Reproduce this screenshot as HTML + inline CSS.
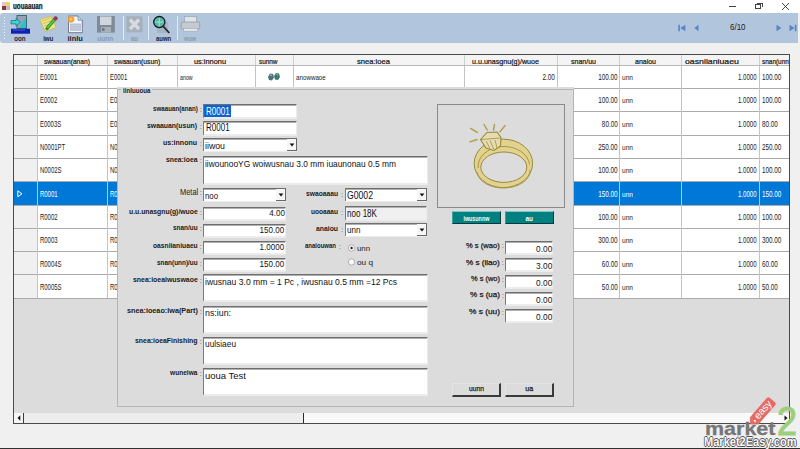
<!DOCTYPE html>
<html><head><meta charset="utf-8"><style>
html,body{margin:0;padding:0;width:800px;height:449px;overflow:hidden;background:#f0f0f0;}
body{position:relative;font-family:"Liberation Sans",sans-serif;}
.b{position:absolute;}
.t{position:absolute;white-space:nowrap;}
</style></head><body>
<div class="b" style="left:0px;top:0px;width:800px;height:449px;background:#f0f0f0;"></div>
<div class="b" style="left:0px;top:0px;width:800px;height:13px;background:#fff;"></div>
<div class="b" style="left:2px;top:2px;width:4px;height:4px;background:#f0c0d0;"></div>
<div class="b" style="left:6px;top:2px;width:4px;height:4px;background:#e8d860;"></div>
<div class="b" style="left:2px;top:6px;width:4px;height:4px;background:#8a3a30;"></div>
<div class="b" style="left:6px;top:6px;width:4px;height:4px;background:#c8b8c8;"></div>
<div class="t" style="left:13.40px;top:3.05px;font-size:8.20px;line-height:8.20px;color:#111;font-weight:bold;transform:scaleX(0.764);transform-origin:left;-webkit-text-stroke:0.25px #111;">uouaauan</div>
<div class="b" style="left:729px;top:6px;width:7px;height:1px;background:#444;"></div>
<div class="b" style="left:755px;top:4px;width:6px;height:5px;border:1px solid #444;box-sizing:border-box;"></div>
<div class="b" style="left:757px;top:3px;width:6px;height:1px;background:#444;"></div>
<div class="b" style="left:762px;top:3px;width:1px;height:4px;background:#444;"></div>
<svg class="b" style="left:781px;top:2px" width="9" height="9"><path d="M1 1L8 8M8 1L1 8" stroke="#444" stroke-width="1"/></svg>
<div class="b" style="left:0px;top:13px;width:798px;height:30px;background:#b1c5dd;border-radius:3px 0 0 3px;"></div>
<div class="b" style="left:4px;top:17px;width:1px;height:1px;background:#eef3f8;"></div>
<div class="b" style="left:4px;top:20px;width:1px;height:1px;background:#eef3f8;"></div>
<div class="b" style="left:4px;top:23px;width:1px;height:1px;background:#eef3f8;"></div>
<div class="b" style="left:4px;top:26px;width:1px;height:1px;background:#eef3f8;"></div>
<div class="b" style="left:4px;top:29px;width:1px;height:1px;background:#eef3f8;"></div>
<div class="b" style="left:4px;top:32px;width:1px;height:1px;background:#eef3f8;"></div>
<div class="b" style="left:4px;top:35px;width:1px;height:1px;background:#eef3f8;"></div>
<div class="b" style="left:4px;top:38px;width:1px;height:1px;background:#eef3f8;"></div>
<div class="b" style="left:123px;top:16px;width:1px;height:24px;background:#e4ecf4;"></div>
<div class="b" style="left:148px;top:16px;width:1px;height:24px;background:#e4ecf4;"></div>
<div class="b" style="left:177px;top:16px;width:1px;height:24px;background:#e4ecf4;"></div>
<div class="t" style="left:13.13px;top:34.75px;font-size:7.50px;line-height:7.50px;color:#223;font-weight:bold;transform:scaleX(0.822);transform-origin:center;">oon</div>
<div class="t" style="left:42.45px;top:34.75px;font-size:7.50px;line-height:7.50px;color:#223;font-weight:bold;transform:scaleX(0.816);transform-origin:center;">iwu</div>
<div class="t" style="left:67.49px;top:34.75px;font-size:7.50px;line-height:7.50px;color:#223;font-weight:bold;">iinlu</div>
<div class="t" style="left:96.14px;top:34.75px;font-size:7.50px;line-height:7.50px;color:#8a9ab0;font-weight:bold;transform:scaleX(0.873);transform-origin:center;">uunn</div>
<div class="t" style="left:130.12px;top:34.75px;font-size:7.50px;line-height:7.50px;color:#8a9ab0;font-weight:bold;transform:scaleX(0.800);transform-origin:center;">au</div>
<div class="t" style="left:153.72px;top:34.75px;font-size:7.50px;line-height:7.50px;color:#223;font-weight:bold;transform:scaleX(0.803);transform-origin:center;">auwn</div>
<div class="t" style="left:182.28px;top:34.75px;font-size:7.50px;line-height:7.50px;color:#8a9ab0;font-weight:bold;transform:scaleX(0.751);transform-origin:center;">wuw</div>

<svg class="b" style="left:0px;top:13px" width="210" height="24" viewBox="0 13 210 24">
 <!-- exit -->
 <rect x="16.5" y="15" width="10.5" height="14" fill="#3c6a70"/>
 <rect x="17.5" y="16" width="8.5" height="12" fill="#9aa0b8"/>
 <path d="M19 28 L26 17 L26 28 Z" fill="#22c8c8"/>
 <path d="M11 20.5 h5 v-2 l4.5 3.7 l-4.5 3.7 v-2 h-5 Z" fill="#30d8d8" stroke="#1a5a60" stroke-width="0.6"/>
 <rect x="11" y="28.7" width="19" height="5" fill="#1020b0"/>
 <rect x="13" y="29.5" width="12" height="1" fill="#4060e0"/>
 <!-- add notepad -->
 <path d="M39.8 19.5 L51 16.2 L56.2 27.5 L45 31.6 Z" fill="#f2e68c" stroke="#c8b458" stroke-width="0.8"/>
 <path d="M42 21 L50.5 18.3 M43 23.5 L52 20.6 M44.2 26 L53 23" stroke="#c0a848" stroke-width="0.7"/>
 <path d="M47 28.5 L54.8 19.2" stroke="#2c8a2a" stroke-width="3.4" stroke-linecap="round"/>
 <path d="M47.3 28 L54.5 19.5" stroke="#5ccc48" stroke-width="1.8"/>
 <circle cx="55.6" cy="18.4" r="2.1" fill="#9a3848"/>
 <!-- edit doc -->
 <path d="M68.5 16 h9.5 l4.3 4.3 v12.4 h-13.8 Z" fill="#f6f7fb" stroke="#646e80" stroke-width="0.9"/>
 <path d="M78 16 v4.3 h4.3" fill="#b8d8e0" stroke="#646e80" stroke-width="0.6"/>
 <rect x="70" y="23.5" width="11" height="7.5" fill="#b8c0d8"/>
 <path d="M70.5 25.5 h10 M70.5 27.7 h10 M70.5 29.9 h10" stroke="#d4daea" stroke-width="0.6"/>
 <circle cx="71" cy="19.3" r="3.8" fill="#f4b0a0" opacity="0.6"/>
 <circle cx="71" cy="19.3" r="3" fill="#f09a20"/>
 <circle cx="71" cy="19.3" r="1.5" fill="#ffd060"/>
 <!-- save (disabled) -->
 <rect x="97" y="16" width="17.8" height="16.6" fill="#7e8a96"/>
 <rect x="100" y="16.5" width="11.5" height="8.5" fill="#d0d6dc"/>
 <rect x="101" y="27" width="10" height="5.6" fill="#a8b0b8"/>
 <rect x="102" y="28" width="2.5" height="3" fill="#707a84"/>
 <!-- delete (disabled) -->
 <rect x="126.5" y="16.3" width="16" height="16" fill="#a6b0ba"/>
 <path d="M130 19.5 L139 29 M139 19.5 L130 29" stroke="#d6dbe0" stroke-width="3.4"/>
 <!-- search -->
 <rect x="157" y="22" width="11" height="11" fill="#a8b4c0"/>
 <circle cx="159.3" cy="22.1" r="5.6" fill="#58b8a8" stroke="#101820" stroke-width="1.3"/>
 <path d="M155 22 h8.6 M159.3 18 v8.5" stroke="#a0e0d0" stroke-width="1"/>
 <path d="M163.3 26.3 L169.3 33" stroke="#202830" stroke-width="1.8"/>
 <!-- print (disabled) -->
 <rect x="184.5" y="16.5" width="12" height="6" fill="#e0e4e8" stroke="#9aa4ae" stroke-width="0.7"/>
 <rect x="181.2" y="22" width="18.5" height="7" rx="1.5" fill="#c4cad0" stroke="#8a949e" stroke-width="0.7"/>
 <rect x="183.5" y="28.5" width="14" height="2.6" fill="#e8ecf0" stroke="#9aa4ae" stroke-width="0.5"/>
</svg>

<svg class="b" style="left:676px;top:22px" width="124" height="12" viewBox="676 22 124 12">
 <rect x="678.3" y="24.8" width="1.6" height="6.5" fill="#5b82cc"/>
 <path d="M685.4 24.8 L680.3 28 L685.4 31.3 Z" fill="#5b82cc"/>
 <path d="M698.5 24.8 L694.4 28 L698.5 31.3 Z" fill="#5b82cc"/>
 <path d="M776.5 24.8 L781.4 28 L776.5 31.3 Z" fill="#5b82cc"/>
 <path d="M789.5 24.8 L794.6 28 L789.5 31.3 Z" fill="#5b82cc"/>
 <rect x="794.8" y="24.8" width="1.6" height="6.5" fill="#5b82cc"/>
</svg>
<div class="t" style="left:730.00px;top:24.35px;font-size:8.20px;line-height:8.20px;color:#222;transform:scaleX(0.977);transform-origin:left;">6/10</div>
<div class="b" style="left:13px;top:54px;width:777px;height:370px;background:#dcdcdc;border:1px solid #4a4a4a;box-sizing:border-box;"></div>
<div class="b" style="left:14px;top:55px;width:775px;height:10px;background:#f4f4f4;"></div>
<div class="b" style="left:14px;top:65px;width:775px;height:1px;background:#b8b8b8;"></div>
<div class="b" style="left:37px;top:55px;width:1px;height:10px;background:#d0d0d0;"></div>
<div class="b" style="left:107px;top:55px;width:1px;height:10px;background:#d0d0d0;"></div>
<div class="b" style="left:177px;top:55px;width:1px;height:10px;background:#d0d0d0;"></div>
<div class="b" style="left:255px;top:55px;width:1px;height:10px;background:#d0d0d0;"></div>
<div class="b" style="left:293px;top:55px;width:1px;height:10px;background:#d0d0d0;"></div>
<div class="b" style="left:464px;top:55px;width:1px;height:10px;background:#d0d0d0;"></div>
<div class="b" style="left:557px;top:55px;width:1px;height:10px;background:#d0d0d0;"></div>
<div class="b" style="left:619px;top:55px;width:1px;height:10px;background:#d0d0d0;"></div>
<div class="b" style="left:681px;top:55px;width:1px;height:10px;background:#d0d0d0;"></div>
<div class="b" style="left:759px;top:55px;width:1px;height:10px;background:#d0d0d0;"></div>
<div class="b" style="left:14px;top:66px;width:23px;height:22px;background:#f0f0f0;"></div>
<div class="b" style="left:38px;top:66px;width:751px;height:22px;background:#ffffff;"></div>
<div class="b" style="left:14px;top:88px;width:775px;height:1px;background:#ababab;"></div>
<div class="b" style="left:14px;top:89px;width:23px;height:22px;background:#f0f0f0;"></div>
<div class="b" style="left:38px;top:89px;width:751px;height:22px;background:#ffffff;"></div>
<div class="b" style="left:14px;top:111px;width:775px;height:1px;background:#ababab;"></div>
<div class="b" style="left:14px;top:112px;width:23px;height:23px;background:#f0f0f0;"></div>
<div class="b" style="left:38px;top:112px;width:751px;height:23px;background:#ffffff;"></div>
<div class="b" style="left:14px;top:135px;width:775px;height:1px;background:#ababab;"></div>
<div class="b" style="left:14px;top:136px;width:23px;height:22px;background:#f0f0f0;"></div>
<div class="b" style="left:38px;top:136px;width:751px;height:22px;background:#ffffff;"></div>
<div class="b" style="left:14px;top:158px;width:775px;height:1px;background:#ababab;"></div>
<div class="b" style="left:14px;top:159px;width:23px;height:22px;background:#f0f0f0;"></div>
<div class="b" style="left:38px;top:159px;width:751px;height:22px;background:#ffffff;"></div>
<div class="b" style="left:14px;top:181px;width:775px;height:1px;background:#ababab;"></div>
<div class="b" style="left:14px;top:182px;width:23px;height:23px;background:#0078d7;"></div>
<div class="b" style="left:38px;top:182px;width:751px;height:23px;background:#0078d7;"></div>
<div class="b" style="left:14px;top:205px;width:775px;height:1px;background:#ababab;"></div>
<div class="b" style="left:14px;top:206px;width:23px;height:22px;background:#f0f0f0;"></div>
<div class="b" style="left:38px;top:206px;width:751px;height:22px;background:#ffffff;"></div>
<div class="b" style="left:14px;top:228px;width:775px;height:1px;background:#ababab;"></div>
<div class="b" style="left:14px;top:229px;width:23px;height:22px;background:#f0f0f0;"></div>
<div class="b" style="left:38px;top:229px;width:751px;height:22px;background:#ffffff;"></div>
<div class="b" style="left:14px;top:251px;width:775px;height:1px;background:#ababab;"></div>
<div class="b" style="left:14px;top:252px;width:23px;height:22px;background:#f0f0f0;"></div>
<div class="b" style="left:38px;top:252px;width:751px;height:22px;background:#ffffff;"></div>
<div class="b" style="left:14px;top:274px;width:775px;height:1px;background:#ababab;"></div>
<div class="b" style="left:14px;top:275px;width:23px;height:23px;background:#f0f0f0;"></div>
<div class="b" style="left:38px;top:275px;width:751px;height:23px;background:#ffffff;"></div>
<div class="b" style="left:14px;top:298px;width:775px;height:1px;background:#ababab;"></div>
<div class="b" style="left:37px;top:66px;width:1px;height:232px;background:#c4c4c4;"></div>
<div class="b" style="left:107px;top:66px;width:1px;height:232px;background:#c4c4c4;"></div>
<div class="b" style="left:177px;top:66px;width:1px;height:232px;background:#c4c4c4;"></div>
<div class="b" style="left:255px;top:66px;width:1px;height:232px;background:#c4c4c4;"></div>
<div class="b" style="left:293px;top:66px;width:1px;height:232px;background:#c4c4c4;"></div>
<div class="b" style="left:464px;top:66px;width:1px;height:232px;background:#c4c4c4;"></div>
<div class="b" style="left:557px;top:66px;width:1px;height:232px;background:#c4c4c4;"></div>
<div class="b" style="left:619px;top:66px;width:1px;height:232px;background:#c4c4c4;"></div>
<div class="b" style="left:681px;top:66px;width:1px;height:232px;background:#c4c4c4;"></div>
<div class="b" style="left:759px;top:66px;width:1px;height:232px;background:#c4c4c4;"></div>
<div class="t" style="left:44.00px;top:57.76px;font-size:7.60px;line-height:7.60px;color:#111;transform:scaleX(0.878);transform-origin:left;-webkit-text-stroke:0.2px #111;">swaauan(anan)</div>
<div class="t" style="left:113.70px;top:57.76px;font-size:7.60px;line-height:7.60px;color:#111;transform:scaleX(0.891);transform-origin:left;-webkit-text-stroke:0.2px #111;">swaauan(usun)</div>
<div class="t" style="left:194.00px;top:57.76px;font-size:7.60px;line-height:7.60px;color:#111;transform:scaleX(0.971);transform-origin:left;-webkit-text-stroke:0.2px #111;">us:innonu</div>
<div class="t" style="left:258.50px;top:57.76px;font-size:7.60px;line-height:7.60px;color:#111;transform:scaleX(0.842);transform-origin:left;-webkit-text-stroke:0.2px #111;">sunnw</div>
<div class="t" style="left:357.00px;top:57.76px;font-size:7.60px;line-height:7.60px;color:#111;-webkit-text-stroke:0.2px #111;">snea:ioea</div>
<div class="t" style="left:472.00px;top:57.76px;font-size:7.60px;line-height:7.60px;color:#111;transform:scaleX(0.938);transform-origin:left;-webkit-text-stroke:0.2px #111;">u.u.unasgnu(g)/wuoe</div>
<div class="t" style="left:571.00px;top:57.76px;font-size:7.60px;line-height:7.60px;color:#111;transform:scaleX(0.924);transform-origin:left;-webkit-text-stroke:0.2px #111;">snan/uu</div>
<div class="t" style="left:635.00px;top:57.76px;font-size:7.60px;line-height:7.60px;color:#111;transform:scaleX(0.920);transform-origin:left;-webkit-text-stroke:0.2px #111;">anaiou</div>
<div class="t" style="left:685.00px;top:57.76px;font-size:7.60px;line-height:7.60px;color:#111;transform:scaleX(1.151);transform-origin:left;-webkit-text-stroke:0.2px #111;">oasniianiuaeu</div>
<div class="t" style="left:762.00px;top:57.76px;font-size:7.60px;line-height:7.60px;color:#111;transform:scaleX(0.848);transform-origin:left;-webkit-text-stroke:0.2px #111;">snan(unn)/uu</div>
<div class="b" style="left:789px;top:55px;width:11px;height:10px;background:#f0f0f0;"></div>
<div class="t" style="left:40.00px;top:73.03px;font-size:8.70px;line-height:8.70px;color:#222;transform:scaleX(0.686);transform-origin:left;">E0001</div>
<div class="t" style="left:110.30px;top:73.03px;font-size:8.70px;line-height:8.70px;color:#222;transform:scaleX(0.686);transform-origin:left;">E0001</div>
<div class="t" style="left:590.69px;top:73.03px;font-size:8.70px;line-height:8.70px;color:#222;transform:scaleX(0.730);transform-origin:right;">100.00</div>
<div class="t" style="left:622.00px;top:74.00px;font-size:7.20px;line-height:7.20px;color:#222;transform:scaleX(0.916);transform-origin:left;">unn</div>
<div class="t" style="left:730.19px;top:73.03px;font-size:8.70px;line-height:8.70px;color:#222;transform:scaleX(0.700);transform-origin:right;">1.0000</div>
<div class="t" style="left:762.00px;top:73.03px;font-size:8.70px;line-height:8.70px;color:#222;transform:scaleX(0.730);transform-origin:left;">100.00</div>
<div class="t" style="left:40.00px;top:96.36px;font-size:8.70px;line-height:8.70px;color:#222;transform:scaleX(0.686);transform-origin:left;">E0002</div>
<div class="t" style="left:110.30px;top:96.36px;font-size:8.70px;line-height:8.70px;color:#222;transform:scaleX(0.686);transform-origin:left;">E0002</div>
<div class="t" style="left:590.69px;top:96.36px;font-size:8.70px;line-height:8.70px;color:#222;transform:scaleX(0.730);transform-origin:right;">100.00</div>
<div class="t" style="left:622.00px;top:97.33px;font-size:7.20px;line-height:7.20px;color:#222;transform:scaleX(0.916);transform-origin:left;">unn</div>
<div class="t" style="left:730.19px;top:96.36px;font-size:8.70px;line-height:8.70px;color:#222;transform:scaleX(0.700);transform-origin:right;">1.0000</div>
<div class="t" style="left:762.00px;top:96.36px;font-size:8.70px;line-height:8.70px;color:#222;transform:scaleX(0.730);transform-origin:left;">100.00</div>
<div class="t" style="left:40.00px;top:119.69px;font-size:8.70px;line-height:8.70px;color:#222;transform:scaleX(0.686);transform-origin:left;">E0003S</div>
<div class="t" style="left:110.30px;top:119.69px;font-size:8.70px;line-height:8.70px;color:#222;transform:scaleX(0.686);transform-origin:left;">E0003S</div>
<div class="t" style="left:595.53px;top:119.69px;font-size:8.70px;line-height:8.70px;color:#222;transform:scaleX(0.730);transform-origin:right;">80.00</div>
<div class="t" style="left:622.00px;top:120.66px;font-size:7.20px;line-height:7.20px;color:#222;transform:scaleX(0.916);transform-origin:left;">unn</div>
<div class="t" style="left:730.19px;top:119.69px;font-size:8.70px;line-height:8.70px;color:#222;transform:scaleX(0.700);transform-origin:right;">1.0000</div>
<div class="t" style="left:762.00px;top:119.69px;font-size:8.70px;line-height:8.70px;color:#222;transform:scaleX(0.730);transform-origin:left;">80.00</div>
<div class="t" style="left:40.00px;top:143.02px;font-size:8.70px;line-height:8.70px;color:#222;transform:scaleX(0.686);transform-origin:left;">N0001PT</div>
<div class="t" style="left:110.30px;top:143.02px;font-size:8.70px;line-height:8.70px;color:#222;transform:scaleX(0.686);transform-origin:left;">N0001PT</div>
<div class="t" style="left:590.69px;top:143.02px;font-size:8.70px;line-height:8.70px;color:#222;transform:scaleX(0.730);transform-origin:right;">250.00</div>
<div class="t" style="left:622.00px;top:143.99px;font-size:7.20px;line-height:7.20px;color:#222;transform:scaleX(0.916);transform-origin:left;">unn</div>
<div class="t" style="left:730.19px;top:143.02px;font-size:8.70px;line-height:8.70px;color:#222;transform:scaleX(0.700);transform-origin:right;">1.0000</div>
<div class="t" style="left:762.00px;top:143.02px;font-size:8.70px;line-height:8.70px;color:#222;transform:scaleX(0.730);transform-origin:left;">250.00</div>
<div class="t" style="left:40.00px;top:166.35px;font-size:8.70px;line-height:8.70px;color:#222;transform:scaleX(0.686);transform-origin:left;">N0002S</div>
<div class="t" style="left:110.30px;top:166.35px;font-size:8.70px;line-height:8.70px;color:#222;transform:scaleX(0.686);transform-origin:left;">N0002S</div>
<div class="t" style="left:590.69px;top:166.35px;font-size:8.70px;line-height:8.70px;color:#222;transform:scaleX(0.730);transform-origin:right;">100.00</div>
<div class="t" style="left:622.00px;top:167.32px;font-size:7.20px;line-height:7.20px;color:#222;transform:scaleX(0.916);transform-origin:left;">unn</div>
<div class="t" style="left:730.19px;top:166.35px;font-size:8.70px;line-height:8.70px;color:#222;transform:scaleX(0.700);transform-origin:right;">1.0000</div>
<div class="t" style="left:762.00px;top:166.35px;font-size:8.70px;line-height:8.70px;color:#222;transform:scaleX(0.730);transform-origin:left;">100.00</div>
<div class="t" style="left:40.00px;top:189.68px;font-size:8.70px;line-height:8.70px;color:#ffffff;transform:scaleX(0.686);transform-origin:left;">R0001</div>
<div class="t" style="left:110.30px;top:189.68px;font-size:8.70px;line-height:8.70px;color:#ffffff;transform:scaleX(0.686);transform-origin:left;">R0001</div>
<div class="t" style="left:590.69px;top:189.68px;font-size:8.70px;line-height:8.70px;color:#ffffff;transform:scaleX(0.730);transform-origin:right;">150.00</div>
<div class="t" style="left:622.00px;top:190.65px;font-size:7.20px;line-height:7.20px;color:#ffffff;transform:scaleX(0.916);transform-origin:left;">unn</div>
<div class="t" style="left:730.19px;top:189.68px;font-size:8.70px;line-height:8.70px;color:#ffffff;transform:scaleX(0.700);transform-origin:right;">1.0000</div>
<div class="t" style="left:762.00px;top:189.68px;font-size:8.70px;line-height:8.70px;color:#ffffff;transform:scaleX(0.730);transform-origin:left;">150.00</div>
<svg class="b" style="left:17px;top:190px" width="6" height="8"><path d="M0.8 0.8 L5 3.8 L0.8 6.8 Z" fill="none" stroke="#fff" stroke-width="1"/></svg>
<div class="t" style="left:40.00px;top:213.01px;font-size:8.70px;line-height:8.70px;color:#222;transform:scaleX(0.686);transform-origin:left;">R0002</div>
<div class="t" style="left:110.30px;top:213.01px;font-size:8.70px;line-height:8.70px;color:#222;transform:scaleX(0.686);transform-origin:left;">R0002</div>
<div class="t" style="left:590.69px;top:213.01px;font-size:8.70px;line-height:8.70px;color:#222;transform:scaleX(0.730);transform-origin:right;">100.00</div>
<div class="t" style="left:622.00px;top:213.98px;font-size:7.20px;line-height:7.20px;color:#222;transform:scaleX(0.916);transform-origin:left;">unn</div>
<div class="t" style="left:730.19px;top:213.01px;font-size:8.70px;line-height:8.70px;color:#222;transform:scaleX(0.700);transform-origin:right;">1.0000</div>
<div class="t" style="left:762.00px;top:213.01px;font-size:8.70px;line-height:8.70px;color:#222;transform:scaleX(0.730);transform-origin:left;">100.00</div>
<div class="t" style="left:40.00px;top:236.34px;font-size:8.70px;line-height:8.70px;color:#222;transform:scaleX(0.686);transform-origin:left;">R0003</div>
<div class="t" style="left:110.30px;top:236.34px;font-size:8.70px;line-height:8.70px;color:#222;transform:scaleX(0.686);transform-origin:left;">R0003</div>
<div class="t" style="left:590.69px;top:236.34px;font-size:8.70px;line-height:8.70px;color:#222;transform:scaleX(0.730);transform-origin:right;">300.00</div>
<div class="t" style="left:622.00px;top:237.31px;font-size:7.20px;line-height:7.20px;color:#222;transform:scaleX(0.916);transform-origin:left;">unn</div>
<div class="t" style="left:730.19px;top:236.34px;font-size:8.70px;line-height:8.70px;color:#222;transform:scaleX(0.700);transform-origin:right;">1.0000</div>
<div class="t" style="left:762.00px;top:236.34px;font-size:8.70px;line-height:8.70px;color:#222;transform:scaleX(0.730);transform-origin:left;">300.00</div>
<div class="t" style="left:40.00px;top:259.67px;font-size:8.70px;line-height:8.70px;color:#222;transform:scaleX(0.686);transform-origin:left;">R0004S</div>
<div class="t" style="left:110.30px;top:259.67px;font-size:8.70px;line-height:8.70px;color:#222;transform:scaleX(0.686);transform-origin:left;">R0004S</div>
<div class="t" style="left:595.53px;top:259.67px;font-size:8.70px;line-height:8.70px;color:#222;transform:scaleX(0.730);transform-origin:right;">60.00</div>
<div class="t" style="left:622.00px;top:260.64px;font-size:7.20px;line-height:7.20px;color:#222;transform:scaleX(0.916);transform-origin:left;">unn</div>
<div class="t" style="left:730.19px;top:259.67px;font-size:8.70px;line-height:8.70px;color:#222;transform:scaleX(0.700);transform-origin:right;">1.0000</div>
<div class="t" style="left:762.00px;top:259.67px;font-size:8.70px;line-height:8.70px;color:#222;transform:scaleX(0.730);transform-origin:left;">60.00</div>
<div class="t" style="left:40.00px;top:283.00px;font-size:8.70px;line-height:8.70px;color:#222;transform:scaleX(0.686);transform-origin:left;">R0005S</div>
<div class="t" style="left:110.30px;top:283.00px;font-size:8.70px;line-height:8.70px;color:#222;transform:scaleX(0.686);transform-origin:left;">R0005S</div>
<div class="t" style="left:595.53px;top:283.00px;font-size:8.70px;line-height:8.70px;color:#222;transform:scaleX(0.730);transform-origin:right;">50.00</div>
<div class="t" style="left:622.00px;top:283.97px;font-size:7.20px;line-height:7.20px;color:#222;transform:scaleX(0.916);transform-origin:left;">unn</div>
<div class="t" style="left:730.19px;top:283.00px;font-size:8.70px;line-height:8.70px;color:#222;transform:scaleX(0.700);transform-origin:right;">1.0000</div>
<div class="t" style="left:762.00px;top:283.00px;font-size:8.70px;line-height:8.70px;color:#222;transform:scaleX(0.730);transform-origin:left;">50.00</div>
<div class="t" style="left:179.60px;top:73.50px;font-size:7.20px;line-height:7.20px;color:#222;transform:scaleX(0.738);transform-origin:left;">anow</div>
<div class="t" style="left:295.50px;top:73.50px;font-size:7.20px;line-height:7.20px;color:#222;transform:scaleX(0.866);transform-origin:left;">anowwaoe</div>
<div class="t" style="left:538.07px;top:73.03px;font-size:8.70px;line-height:8.70px;color:#222;transform:scaleX(0.738);transform-origin:right;">2.00</div>
<svg class="b" style="left:266px;top:71px" width="16" height="11"><path d="M2 6 L4 2.5 L7 3 L8 6.5 L6 9.5 L3 9 Z" fill="#50707e"/><path d="M8 5 L10 2 L13 2.5 L14 6 L12 9 L9 8.5 Z" fill="#3f7a6e"/><path d="M4 4 L6 4.5 M10.5 3.5 L12 4" stroke="#b8d8e0" stroke-width="0.8"/></svg>
<div class="b" style="left:790px;top:43px;width:10px;height:406px;background:#f0f0f0;"></div>
<div class="b" style="left:789px;top:54px;width:1px;height:370px;background:#4a4a4a;"></div>
<div class="b" style="left:14px;top:413px;width:775px;height:10px;background:#f9f9f9;"></div>
<div class="b" style="left:23px;top:413px;width:281px;height:10px;background:#ededed;border-right:1px solid #2a2a2a;box-sizing:border-box;"></div>
<div class="b" style="left:14px;top:413px;width:10px;height:10px;background:#f6f6f6;border-right:1px solid #3a3a3a;box-sizing:border-box;"></div>
<svg class="b" style="left:16px;top:414px" width="6" height="8"><path d="M4.3 1.3 L1.5 4 L4.3 6.7 Z" fill="#111"/></svg>
<div class="b" style="left:783px;top:413px;width:6px;height:10px;background:#f6f6f6;"></div>
<svg class="b" style="left:783px;top:414px" width="6" height="8"><path d="M1.5 1.5 L4.5 4 L1.5 6.5 Z" fill="#111"/></svg>
<div class="b" style="left:0px;top:448px;width:800px;height:1px;background:#303030;"></div>
<div class="b" style="left:117px;top:87px;width:457px;height:326px;background:#dcdcdc;"></div>
<div class="b" style="left:117px;top:89px;width:457px;height:318px;border:1px solid #b4b4b4;box-sizing:border-box;"></div>
<div class="b" style="left:121px;top:87px;width:31px;height:6px;background:#dcdcdc;"></div>
<div class="t" style="left:123.00px;top:86.73px;font-size:7.40px;line-height:7.40px;color:#1a1a1a;font-weight:bold;transform:scaleX(0.836);transform-origin:left;">iinluuoua</div>
<div class="b" style="left:203px;top:104px;width:94px;height:15px;background:#fff;border-top:1px solid #6e6e6e;border-left:1px solid #7a7a7a;border-bottom:2px solid #ececec;border-right:1px solid #ececec;box-sizing:border-box;box-shadow:inset 0 1px 0 #b0b0b0;"></div>
<div class="b" style="left:203px;top:121px;width:94px;height:15px;background:#fff;border-top:1px solid #6e6e6e;border-left:1px solid #7a7a7a;border-bottom:2px solid #ececec;border-right:1px solid #ececec;box-sizing:border-box;box-shadow:inset 0 1px 0 #b0b0b0;"></div>
<div class="b" style="left:203px;top:138px;width:94px;height:13px;background:#fff;border-top:1px solid #6e6e6e;border-left:1px solid #7a7a7a;box-sizing:border-box;box-shadow:inset 0 1px 0 #b0b0b0, 0 1px 0 #ececec;"></div>
<div class="b" style="left:287px;top:139px;width:10px;height:12px;background:#f6f6f6;border-right:1px solid #666;border-bottom:1px solid #666;box-sizing:border-box;"></div>
<svg class="b" style="left:289.0px;top:142.7px" width="6" height="4"><path d="M0.6 0.6 L5.4 0.6 L3 3.4 Z" fill="#111"/></svg>
<div class="b" style="left:203px;top:156px;width:225px;height:29px;background:#fff;border-top:1px solid #6e6e6e;border-left:1px solid #7a7a7a;border-bottom:2px solid #ececec;border-right:1px solid #ececec;box-sizing:border-box;box-shadow:inset 0 1px 0 #b0b0b0;"></div>
<div class="b" style="left:203px;top:188px;width:83px;height:13px;background:#fff;border-top:1px solid #6e6e6e;border-left:1px solid #7a7a7a;box-sizing:border-box;box-shadow:inset 0 1px 0 #b0b0b0, 0 1px 0 #ececec;"></div>
<div class="b" style="left:276px;top:189px;width:10px;height:12px;background:#f6f6f6;border-right:1px solid #666;border-bottom:1px solid #666;box-sizing:border-box;"></div>
<svg class="b" style="left:278.0px;top:192.7px" width="6" height="4"><path d="M0.6 0.6 L5.4 0.6 L3 3.4 Z" fill="#111"/></svg>
<div class="b" style="left:203px;top:207px;width:83px;height:14px;background:#fff;border-top:1px solid #6e6e6e;border-left:1px solid #7a7a7a;border-bottom:2px solid #ececec;border-right:1px solid #ececec;box-sizing:border-box;box-shadow:inset 0 1px 0 #b0b0b0;"></div>
<div class="b" style="left:203px;top:224px;width:83px;height:14px;background:#fff;border-top:1px solid #6e6e6e;border-left:1px solid #7a7a7a;border-bottom:2px solid #ececec;border-right:1px solid #ececec;box-sizing:border-box;box-shadow:inset 0 1px 0 #b0b0b0;"></div>
<div class="b" style="left:203px;top:241px;width:83px;height:14px;background:#fff;border-top:1px solid #6e6e6e;border-left:1px solid #7a7a7a;border-bottom:2px solid #ececec;border-right:1px solid #ececec;box-sizing:border-box;box-shadow:inset 0 1px 0 #b0b0b0;"></div>
<div class="b" style="left:203px;top:258px;width:83px;height:14px;background:#fff;border-top:1px solid #6e6e6e;border-left:1px solid #7a7a7a;border-bottom:2px solid #ececec;border-right:1px solid #ececec;box-sizing:border-box;box-shadow:inset 0 1px 0 #b0b0b0;"></div>
<div class="b" style="left:203px;top:274px;width:225px;height:28px;background:#fff;border-top:1px solid #6e6e6e;border-left:1px solid #7a7a7a;border-bottom:2px solid #ececec;border-right:1px solid #ececec;box-sizing:border-box;box-shadow:inset 0 1px 0 #b0b0b0;"></div>
<div class="b" style="left:203px;top:306px;width:225px;height:28px;background:#fff;border-top:1px solid #6e6e6e;border-left:1px solid #7a7a7a;border-bottom:2px solid #ececec;border-right:1px solid #ececec;box-sizing:border-box;box-shadow:inset 0 1px 0 #b0b0b0;"></div>
<div class="b" style="left:203px;top:337px;width:225px;height:28px;background:#fff;border-top:1px solid #6e6e6e;border-left:1px solid #7a7a7a;border-bottom:2px solid #ececec;border-right:1px solid #ececec;box-sizing:border-box;box-shadow:inset 0 1px 0 #b0b0b0;"></div>
<div class="b" style="left:203px;top:368px;width:225px;height:28px;background:#fff;border-top:1px solid #6e6e6e;border-left:1px solid #7a7a7a;border-bottom:2px solid #ececec;border-right:1px solid #ececec;box-sizing:border-box;box-shadow:inset 0 1px 0 #b0b0b0;"></div>
<div class="b" style="left:345px;top:188px;width:82px;height:13px;background:#fff;border-top:1px solid #6e6e6e;border-left:1px solid #7a7a7a;box-sizing:border-box;box-shadow:inset 0 1px 0 #b0b0b0, 0 1px 0 #ececec;"></div>
<div class="b" style="left:417px;top:189px;width:10px;height:12px;background:#f6f6f6;border-right:1px solid #666;border-bottom:1px solid #666;box-sizing:border-box;"></div>
<svg class="b" style="left:419.0px;top:192.7px" width="6" height="4"><path d="M0.6 0.6 L5.4 0.6 L3 3.4 Z" fill="#111"/></svg>
<div class="b" style="left:345px;top:206px;width:82px;height:15px;background:#f0f0f0;border-top:1px solid #6e6e6e;border-left:1px solid #7a7a7a;border-bottom:2px solid #ececec;border-right:1px solid #ececec;box-sizing:border-box;box-shadow:inset 0 1px 0 #b0b0b0;"></div>
<div class="b" style="left:345px;top:223px;width:82px;height:13px;background:#fff;border-top:1px solid #6e6e6e;border-left:1px solid #7a7a7a;box-sizing:border-box;box-shadow:inset 0 1px 0 #b0b0b0, 0 1px 0 #ececec;"></div>
<div class="b" style="left:417px;top:224px;width:10px;height:12px;background:#f6f6f6;border-right:1px solid #666;border-bottom:1px solid #666;box-sizing:border-box;"></div>
<svg class="b" style="left:419.0px;top:227.7px" width="6" height="4"><path d="M0.6 0.6 L5.4 0.6 L3 3.4 Z" fill="#111"/></svg>
<div class="b" style="left:437px;top:104px;width:128px;height:104px;border:1px solid #8a8a8a;box-sizing:border-box;background:#dcdcdc;"></div>
<div class="b" style="left:452px;top:211px;width:49px;height:13px;background:#008080;border-top:1px solid #7cc8c8;border-left:1px solid #40a0a0;border-bottom:1px solid #003c3c;border-right:1px solid #003c3c;box-sizing:border-box;"></div>
<div class="b" style="left:505px;top:211px;width:49px;height:13px;background:#008080;border-top:1px solid #7cc8c8;border-left:1px solid #40a0a0;border-bottom:1px solid #003c3c;border-right:1px solid #003c3c;box-sizing:border-box;"></div>
<div class="t" style="left:459.40px;top:214.90px;font-size:7.20px;line-height:7.20px;color:#f4ffff;font-weight:bold;transform:scaleX(0.747);transform-origin:center;">iwusunnw</div>
<div class="t" style="left:525.30px;top:214.90px;font-size:7.20px;line-height:7.20px;color:#f4ffff;font-weight:bold;transform:scaleX(0.893);transform-origin:center;">au</div>
<div class="b" style="left:505px;top:241px;width:48px;height:14px;background:#fff;border-top:1px solid #6e6e6e;border-left:1px solid #7a7a7a;border-bottom:2px solid #ececec;border-right:1px solid #ececec;box-sizing:border-box;box-shadow:inset 0 1px 0 #b0b0b0;"></div>
<div class="b" style="left:505px;top:258px;width:48px;height:14px;background:#fff;border-top:1px solid #6e6e6e;border-left:1px solid #7a7a7a;border-bottom:2px solid #ececec;border-right:1px solid #ececec;box-sizing:border-box;box-shadow:inset 0 1px 0 #b0b0b0;"></div>
<div class="b" style="left:505px;top:275px;width:48px;height:14px;background:#fff;border-top:1px solid #6e6e6e;border-left:1px solid #7a7a7a;border-bottom:2px solid #ececec;border-right:1px solid #ececec;box-sizing:border-box;box-shadow:inset 0 1px 0 #b0b0b0;"></div>
<div class="b" style="left:505px;top:292px;width:48px;height:14px;background:#fff;border-top:1px solid #6e6e6e;border-left:1px solid #7a7a7a;border-bottom:2px solid #ececec;border-right:1px solid #ececec;box-sizing:border-box;box-shadow:inset 0 1px 0 #b0b0b0;"></div>
<div class="b" style="left:505px;top:309px;width:48px;height:14px;background:#fff;border-top:1px solid #6e6e6e;border-left:1px solid #7a7a7a;border-bottom:2px solid #ececec;border-right:1px solid #ececec;box-sizing:border-box;box-shadow:inset 0 1px 0 #b0b0b0;"></div>
<div class="b" style="left:452px;top:383px;width:49px;height:14px;background:#dcdcdc;border-top:1px solid #f4f4f4;border-left:1px solid #f4f4f4;border-bottom:2px solid #3a3a3a;border-right:2px solid #3a3a3a;border-top-color:#e4e4e4;border-left-color:#e4e4e4;box-sizing:border-box;"></div>
<div class="b" style="left:505px;top:383px;width:49px;height:14px;background:#dcdcdc;border-top:1px solid #f4f4f4;border-left:1px solid #f4f4f4;border-bottom:2px solid #3a3a3a;border-right:2px solid #3a3a3a;border-top-color:#e4e4e4;border-left-color:#e4e4e4;box-sizing:border-box;"></div>
<div class="t" style="left:467.55px;top:385.36px;font-size:7.60px;line-height:7.60px;color:#1a1a1a;transform:scaleX(0.887);transform-origin:center;-webkit-text-stroke:0.25px #1a1a1a;">uunn</div>
<div class="t" style="left:524.77px;top:385.36px;font-size:7.60px;line-height:7.60px;color:#1a1a1a;transform:scaleX(0.946);transform-origin:center;-webkit-text-stroke:0.25px #1a1a1a;">ua</div>
<div class="t" style="left:152.70px;top:104.82px;font-size:8.00px;line-height:8.00px;color:#1a1a1a;font-weight:bold;transform:scaleX(0.775);transform-origin:left;">swaauan(anan)</div>
<div class="t" style="left:199.80px;top:105.85px;font-size:7.50px;line-height:7.50px;color:#555;">:</div>
<div class="t" style="left:147.40px;top:121.52px;font-size:8.00px;line-height:8.00px;color:#1a1a1a;font-weight:bold;transform:scaleX(0.860);transform-origin:left;">swaauan(usun)</div>
<div class="t" style="left:199.80px;top:122.55px;font-size:7.50px;line-height:7.50px;color:#555;">:</div>
<div class="t" style="left:163.40px;top:138.82px;font-size:8.00px;line-height:8.00px;color:#1a1a1a;font-weight:bold;transform:scaleX(0.882);transform-origin:left;">us:innonu</div>
<div class="t" style="left:199.80px;top:139.85px;font-size:7.50px;line-height:7.50px;color:#555;">:</div>
<div class="t" style="left:166.00px;top:156.42px;font-size:8.00px;line-height:8.00px;color:#1a1a1a;font-weight:bold;transform:scaleX(0.854);transform-origin:left;">snea:ioea</div>
<div class="t" style="left:199.80px;top:157.45px;font-size:7.50px;line-height:7.50px;color:#555;">:</div>
<div class="t" style="left:128.70px;top:207.82px;font-size:8.00px;line-height:8.00px;color:#1a1a1a;font-weight:bold;transform:scaleX(0.855);transform-origin:left;">u.u.unasgnu(g)/wuoe</div>
<div class="t" style="left:199.80px;top:208.85px;font-size:7.50px;line-height:7.50px;color:#555;">:</div>
<div class="t" style="left:172.80px;top:223.92px;font-size:8.00px;line-height:8.00px;color:#1a1a1a;font-weight:bold;transform:scaleX(0.805);transform-origin:left;">snan/uu</div>
<div class="t" style="left:199.80px;top:224.95px;font-size:7.50px;line-height:7.50px;color:#555;">:</div>
<div class="t" style="left:152.80px;top:241.62px;font-size:8.00px;line-height:8.00px;color:#1a1a1a;font-weight:bold;transform:scaleX(0.838);transform-origin:left;">oasniianiuaeu</div>
<div class="t" style="left:199.80px;top:242.65px;font-size:7.50px;line-height:7.50px;color:#555;">:</div>
<div class="t" style="left:156.80px;top:259.02px;font-size:8.00px;line-height:8.00px;color:#1a1a1a;font-weight:bold;transform:scaleX(0.803);transform-origin:left;">snan(unn)/uu</div>
<div class="t" style="left:199.80px;top:260.05px;font-size:7.50px;line-height:7.50px;color:#555;">:</div>
<div class="t" style="left:132.70px;top:276.42px;font-size:8.00px;line-height:8.00px;color:#1a1a1a;font-weight:bold;transform:scaleX(0.868);transform-origin:left;">snea:ioeaiwuswaoe</div>
<div class="t" style="left:199.80px;top:277.45px;font-size:7.50px;line-height:7.50px;color:#555;">:</div>
<div class="t" style="left:126.70px;top:306.82px;font-size:8.00px;line-height:8.00px;color:#1a1a1a;font-weight:bold;transform:scaleX(0.905);transform-origin:left;">snea:ioeao:lwa(Part)</div>
<div class="t" style="left:199.80px;top:307.85px;font-size:7.50px;line-height:7.50px;color:#555;">:</div>
<div class="t" style="left:135.00px;top:337.12px;font-size:8.00px;line-height:8.00px;color:#1a1a1a;font-weight:bold;transform:scaleX(0.863);transform-origin:left;">snea:ioeaFinishing</div>
<div class="t" style="left:199.80px;top:338.15px;font-size:7.50px;line-height:7.50px;color:#555;">:</div>
<div class="t" style="left:170.00px;top:369.42px;font-size:8.00px;line-height:8.00px;color:#1a1a1a;font-weight:bold;transform:scaleX(0.825);transform-origin:left;">wuneiwa</div>
<div class="t" style="left:199.80px;top:370.45px;font-size:7.50px;line-height:7.50px;color:#555;">:</div>
<div class="t" style="left:179.80px;top:187.24px;font-size:9.40px;line-height:9.40px;color:#222;transform:scaleX(0.792);transform-origin:left;">Metal</div>
<div class="t" style="left:199.80px;top:189.25px;font-size:7.50px;line-height:7.50px;color:#555;">:</div>
<div class="t" style="left:306.00px;top:189.62px;font-size:8.00px;line-height:8.00px;color:#1a1a1a;font-weight:bold;transform:scaleX(0.837);transform-origin:left;">swaoaaau</div>
<div class="t" style="left:341.00px;top:190.65px;font-size:7.50px;line-height:7.50px;color:#555;">:</div>
<div class="t" style="left:311.00px;top:208.02px;font-size:8.00px;line-height:8.00px;color:#1a1a1a;font-weight:bold;transform:scaleX(0.821);transform-origin:left;">uooaaau</div>
<div class="t" style="left:341.00px;top:209.05px;font-size:7.50px;line-height:7.50px;color:#555;">:</div>
<div class="t" style="left:316.00px;top:225.02px;font-size:8.00px;line-height:8.00px;color:#1a1a1a;font-weight:bold;transform:scaleX(0.853);transform-origin:left;">anaiou</div>
<div class="t" style="left:341.00px;top:226.05px;font-size:7.50px;line-height:7.50px;color:#555;">:</div>
<div class="t" style="left:305.00px;top:241.52px;font-size:8.00px;line-height:8.00px;color:#1a1a1a;font-weight:bold;transform:scaleX(0.750);transform-origin:left;">anaiouwan</div>
<div class="t" style="left:339.00px;top:242.55px;font-size:7.50px;line-height:7.50px;color:#555;">:</div>
<svg class="b" style="left:347px;top:244px" width="9" height="22"><circle cx="4.6" cy="4" r="3.2" fill="#fafafa" stroke="#a0a0a0" stroke-width="0.8"/><circle cx="4.6" cy="4" r="1.2" fill="#222"/><circle cx="4.6" cy="18" r="3.2" fill="#fafafa" stroke="#a0a0a0" stroke-width="0.8"/></svg>
<div class="t" style="left:357.00px;top:244.59px;font-size:7.80px;line-height:7.80px;color:#1a1a1a;">unn</div>
<div class="t" style="left:357.00px;top:258.59px;font-size:7.80px;line-height:7.80px;color:#1a1a1a;transform:scaleX(1.054);transform-origin:left;">ou q</div>
<div class="t" style="left:466.00px;top:241.69px;font-size:7.80px;line-height:7.80px;color:#1a1a1a;transform:scaleX(0.975);transform-origin:left;-webkit-text-stroke:0.25px #1a1a1a;">% s (wao)</div>
<div class="t" style="left:501.80px;top:242.45px;font-size:7.50px;line-height:7.50px;color:#555;">:</div>
<div class="t" style="left:466.00px;top:258.59px;font-size:7.80px;line-height:7.80px;color:#1a1a1a;transform:scaleX(1.040);transform-origin:left;-webkit-text-stroke:0.25px #1a1a1a;">% s (iiao)</div>
<div class="t" style="left:501.80px;top:259.35px;font-size:7.50px;line-height:7.50px;color:#555;">:</div>
<div class="t" style="left:470.90px;top:275.49px;font-size:7.80px;line-height:7.80px;color:#1a1a1a;transform:scaleX(0.953);transform-origin:left;-webkit-text-stroke:0.25px #1a1a1a;">% s (wo)</div>
<div class="t" style="left:501.80px;top:276.25px;font-size:7.50px;line-height:7.50px;color:#555;">:</div>
<div class="t" style="left:469.80px;top:291.39px;font-size:7.80px;line-height:7.80px;color:#1a1a1a;transform:scaleX(1.033);transform-origin:left;-webkit-text-stroke:0.25px #1a1a1a;">% s (ua)</div>
<div class="t" style="left:501.80px;top:292.15px;font-size:7.50px;line-height:7.50px;color:#555;">:</div>
<div class="t" style="left:468.75px;top:308.29px;font-size:7.80px;line-height:7.80px;color:#1a1a1a;transform:scaleX(1.069);transform-origin:left;-webkit-text-stroke:0.25px #1a1a1a;">% s (uu)</div>
<div class="t" style="left:501.80px;top:309.05px;font-size:7.50px;line-height:7.50px;color:#555;">:</div>
<div class="b" style="left:204.2px;top:105px;width:26.8px;height:11.8px;background:#0a64d2;"></div>
<div class="t" style="left:205.60px;top:106.42px;font-size:10.60px;line-height:10.60px;color:#fff;transform:scaleX(0.762);transform-origin:left;">R0001</div>
<div class="t" style="left:205.60px;top:123.29px;font-size:10.40px;line-height:10.40px;color:#111;transform:scaleX(0.777);transform-origin:left;">R0001</div>
<div class="t" style="left:205.00px;top:141.34px;font-size:9.40px;line-height:9.40px;color:#111;transform:scaleX(0.934);transform-origin:left;">iiwou</div>
<div class="t" style="left:204.60px;top:158.60px;font-size:9.80px;line-height:9.80px;color:#111;transform:scaleX(0.855);transform-origin:left;">iiwounooYG woiwusnau 3.0 mm iuaunonau 0.5 mm</div>
<div class="t" style="left:205.00px;top:190.64px;font-size:9.40px;line-height:9.40px;color:#111;transform:scaleX(0.829);transform-origin:left;">noo</div>
<div class="t" style="left:347.00px;top:190.02px;font-size:10.60px;line-height:10.60px;color:#111;transform:scaleX(0.817);transform-origin:left;">G0002</div>
<div class="t" style="left:347.00px;top:208.76px;font-size:10.20px;line-height:10.20px;color:#111;transform:scaleX(0.789);transform-origin:left;">noo 18K</div>
<div class="t" style="left:347.00px;top:225.44px;font-size:9.40px;line-height:9.40px;color:#111;transform:scaleX(0.861);transform-origin:left;">unn</div>
<div class="t" style="left:266.59px;top:209.41px;font-size:9.20px;line-height:9.20px;color:#111;transform:scaleX(0.875);transform-origin:right;">4.00</div>
<div class="t" style="left:256.36px;top:226.41px;font-size:9.20px;line-height:9.20px;color:#111;transform:scaleX(0.875);transform-origin:right;">150.00</div>
<div class="t" style="left:256.36px;top:243.41px;font-size:9.20px;line-height:9.20px;color:#111;transform:scaleX(0.875);transform-origin:right;">1.0000</div>
<div class="t" style="left:256.36px;top:260.41px;font-size:9.20px;line-height:9.20px;color:#111;transform:scaleX(0.875);transform-origin:right;">150.00</div>
<div class="t" style="left:204.50px;top:276.70px;font-size:9.80px;line-height:9.80px;color:#111;transform:scaleX(0.873);transform-origin:left;">iwusnau 3.0 mm = 1 Pc , iwusnau 0.5 mm =12 Pcs</div>
<div class="t" style="left:204.50px;top:308.98px;font-size:9.00px;line-height:9.00px;color:#111;transform:scaleX(0.981);transform-origin:left;">ns:iun:</div>
<div class="t" style="left:204.50px;top:340.38px;font-size:9.00px;line-height:9.00px;color:#111;transform:scaleX(0.925);transform-origin:left;">uulsiaeu</div>
<div class="t" style="left:204.50px;top:371.30px;font-size:9.80px;line-height:9.80px;color:#111;transform:scaleX(0.969);transform-origin:left;">uoua Test</div>
<div class="t" style="left:533.70px;top:243.84px;font-size:9.40px;line-height:9.40px;color:#111;transform:scaleX(0.885);transform-origin:right;">0.00</div>
<div class="t" style="left:533.70px;top:260.84px;font-size:9.40px;line-height:9.40px;color:#111;transform:scaleX(0.885);transform-origin:right;">3.00</div>
<div class="t" style="left:533.70px;top:277.84px;font-size:9.40px;line-height:9.40px;color:#111;transform:scaleX(0.885);transform-origin:right;">0.00</div>
<div class="t" style="left:533.70px;top:294.84px;font-size:9.40px;line-height:9.40px;color:#111;transform:scaleX(0.885);transform-origin:right;">0.00</div>
<div class="t" style="left:533.70px;top:311.84px;font-size:9.40px;line-height:9.40px;color:#111;transform:scaleX(0.885);transform-origin:right;">0.00</div>

<svg class="b" style="left:438px;top:105px" width="126" height="101" viewBox="438 105 126 101">
 <path d="M470.6 128.4 L477.3 132.3 M470 141.8 L477 139.5 M484 124.5 L487.3 130 M494.5 124.5 L493.5 130 M505 125.6 L500 131.7" stroke="#ad9d45" stroke-width="1.4" stroke-linecap="round" fill="none"/>
 <path fill-rule="evenodd" fill="#e2d290" stroke="#9a8a36" stroke-width="1"
   d="M474.2 163.4 A29.2 24.2 0 1 0 532.6 163.4 A29.2 24.2 0 1 0 474.2 163.4 Z
      M480.8 167.2 A23 15.2 0 1 1 526.8 167.2 A23 15.2 0 1 1 480.8 167.2 Z"/>
 <path fill="none" stroke="#a08f3a" stroke-width="0.9" d="M478.2 168 A25.5 19.5 0 1 1 529.6 164.5"/>
 <path fill="none" stroke="#a08f3a" stroke-width="0.8" d="M477 172 A26.5 17 0 0 0 530 170"/>
 <path fill="#e6dcb4" stroke="#9a8a36" stroke-width="1.1" d="M480.5 139.5 L487 132.5 L497 132 L501 137.5 L500.5 146 L494 150.5 L486 148 Z"/>
 <path fill="none" stroke="#a08f3a" stroke-width="0.8" d="M481 139.5 L500.5 138 M486 141 L490 148.5 M490 140.5 L494 149.5 M495 140 L497 148"/>
</svg>
<div class="t" style="left:704.60px;top:419.11px;font-size:19.00px;line-height:19.00px;color:#767676;font-weight:bold;transform:scaleX(1.130);transform-origin:left;-webkit-text-stroke:0.3px #767676;">market</div>
<div class="t" style="left:776.50px;top:400.70px;font-size:40.50px;line-height:40.50px;color:#9ccf7c;transform:scaleX(0.888);transform-origin:left;-webkit-text-stroke:1.1px #9ccf7c;">2</div>
<div class="b" style="left:745px;top:406.5px;width:33px;height:11px;transform:rotate(-49deg);transform-origin:center;">
<div class="b" style="left:5px;top:0;width:28px;height:11px;background:#e66a64;border-radius:0 2px 2px 0;"></div>
<div class="b" style="left:0;top:0;width:0;height:0;border-top:5.5px solid transparent;border-bottom:5.5px solid transparent;border-right:5px solid #e66a64;"></div>
<div class="b" style="left:4.5px;top:4.5px;width:2px;height:2px;background:#fff;border-radius:1px;"></div>
<div class="t" style="left:9px;top:0px;font-size:10px;line-height:10px;color:#fff;">easy</div>
</div>
<div class="t" style="left:704.40px;top:436.05px;font-size:12.10px;line-height:12.10px;color:#fafafa;font-weight:bold;transform:scaleX(0.913);transform-origin:left;text-shadow:0.8px 0 0 #505050,-0.8px 0 0 #505050,0 0.8px 0 #505050,0 -0.8px 0 #505050;">Market2Easy.com</div>
</body></html>
